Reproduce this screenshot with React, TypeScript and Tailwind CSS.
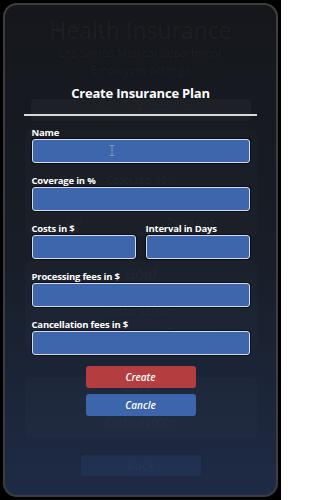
import React from "react";

const font = { fontFamily: '"Open Sans", "Noto Sans", sans-serif' };

function Field({ label, className = "" }: { label: string; className?: string }) {
  return (
    <div className={"flex flex-col " + className}>
      <div className="h-[12px] text-[9.5px] leading-[12px] font-bold text-white tracking-[-0.2px]">{label}</div>
      <div className="h-[24px] rounded-[3px] border border-[#d3dbea] bg-[#3d66ad] shadow-[0_0_0_1px_rgba(0,0,0,0.5)]" />
    </div>
  );
}

export default function App() {
  return (
    <div className="w-[281px] h-[500px] bg-black p-[3px]" style={font}>
      <div className="relative w-full h-full rounded-[14px] border-2 border-[#3b3d41] overflow-hidden bg-gradient-to-b from-[#15171b] via-[#181d27] to-[#1e2b46]">
        {/* faded background page */}
        <div className="flex flex-col items-center text-white/[0.045]">
          <div className="mt-[12px] text-[23px] leading-[26px]">Health Insurance</div>
          <div className="mt-[2px] text-[11px] leading-[15px]">Los Santos Medical Department</div>
          <div className="mt-[2px] text-[11px] leading-[15px]">Employees settings</div>
          <div className="mt-[22px] w-[220px] h-[22px] rounded-[4px] bg-white/[0.03] flex items-center justify-center text-[8px]">Create New Insurance Plan</div>
          <div className="mt-[8px] w-[232px] h-[108px] rounded-[6px] bg-white/[0.015] flex flex-col items-center">
            <div className="mt-[6px] text-[15px] leading-[20px]">Platinum</div>
            <div className="mt-[18px] text-[10px] leading-[14px]">Coverage: 60%</div>
            <div className="mt-[2px] text-[10px] leading-[14px]">Costs: $4000*</div>
            <div className="mt-[12px] w-full flex justify-around text-[9px]">
              <span>Edit</span>
              <span className="text-[#e05050]/[0.12]">Delete plan</span>
            </div>
          </div>
          <div className="mt-[24px] w-[232px] h-[88px] rounded-[6px] bg-white/[0.015] flex flex-col items-center">
            <div className="mt-[2px] text-[15px] leading-[20px]">Gold</div>
            <div className="mt-[2px] text-[11px] leading-[16px]">Coverage: 40%</div>
            <div className="mt-[2px] text-[11px] leading-[16px]">Costs: $3000*</div>
            <div className="mt-[6px] w-full flex justify-around text-[9px]">
              <span>Edit</span>
              <span>Delete plan</span>
            </div>
          </div>
          <div className="mt-[28px] w-[232px] h-[62px] rounded-[6px] bg-white/[0.015] flex flex-col items-center">
            <div className="mt-[0px] text-[14px] leading-[18px]">Silver</div>
            <div className="mt-[4px] text-[11px] leading-[15px]">Coverage: 20%</div>
            <div className="mt-[0px] text-[11px] leading-[15px]">Costs: $2000*</div>
          </div>
          <div className="mt-[16px] w-[120px] h-[21px] rounded-[3px] bg-[#2a4370]/30 flex items-center justify-center text-[13px] italic">Back</div>
        </div>

        {/* modal overlay */}
        <div className="absolute inset-0 flex flex-col items-center">
          <div className="mt-[78px] h-[20px] text-[13px] leading-[20px] font-bold text-white tracking-[-0.2px]">Create Insurance Plan</div>
          <div className="mt-[11px] w-[233px] h-[2px] bg-[#d9d9d9]" />
          <div className="mt-[11px] w-[218px] flex flex-col gap-[12px]">
            <div className="relative">
              <Field label="Name" />
              <svg className="absolute left-[77px] top-[18px]" width="6" height="11" viewBox="0 0 6 11">
                <path d="M0.5 0.5h5M3 0.5v10M0.5 10.5h5" stroke="#8796b8" strokeWidth="1" fill="none" />
              </svg>
            </div>
            <Field label="Coverage in %" />
            <div className="flex gap-[10px]">
              <Field label="Costs in $" className="flex-1" />
              <Field label="Interval in Days" className="flex-1" />
            </div>
            <Field label="Processing fees in $" />
            <Field label="Cancellation fees in $" />
          </div>
          <div className="mt-[11px] w-[110px] h-[22px] rounded-[3px] bg-[#b43d40] flex items-center justify-center text-[10px] italic font-semibold text-white">Create</div>
          <div className="mt-[6px] w-[110px] h-[22px] rounded-[3px] bg-[#3d65ac] flex items-center justify-center text-[10px] italic font-semibold text-white">Cancle</div>
        </div>
      </div>
    </div>
  );
}
